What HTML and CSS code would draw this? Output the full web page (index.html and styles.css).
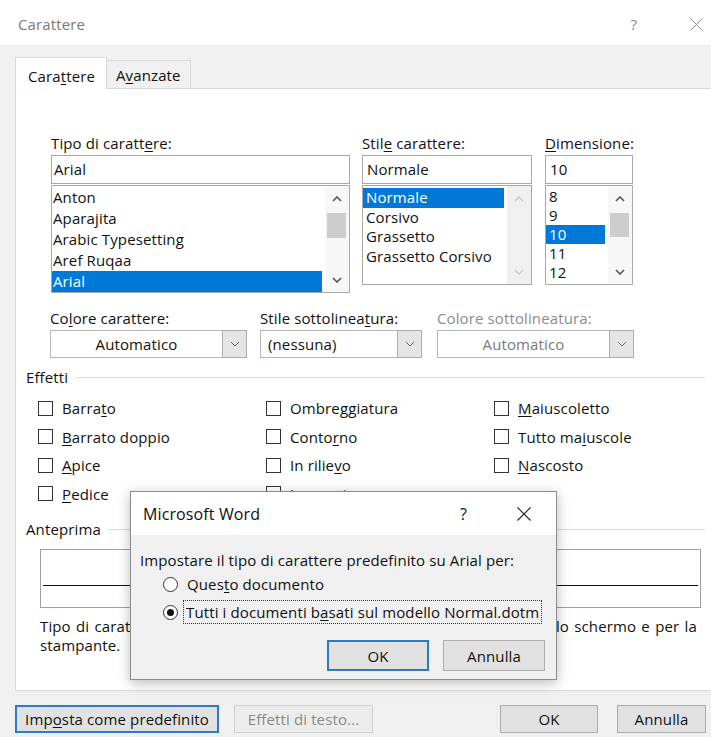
FILE: index.html
```html
<!DOCTYPE html>
<html lang="it">
<head>
<meta charset="utf-8">
<title>Carattere</title>
<link rel="stylesheet" href="styles.css">
</head>
<body>
<div class="dialog">
  <header class="titlebar">
    <span class="title">Carattere</span>
    <span class="tb-help">?</span>
    <svg class="tb-close" width="13" height="13" viewBox="0 0 13 13"><path d="M0.5 0.5 L12.5 12.5 M12.5 0.5 L0.5 12.5" stroke="#8a8a8a" stroke-width="1" fill="none"/></svg>
  </header>

  <nav class="tabstrip">
    <div class="tab active">Cara<u>t</u>tere</div>
    <div class="tab">A<u>v</u>anzate</div>
  </nav>

  <section class="panel">
    <div class="font-row">
      <div class="field f-name">
        <div class="lbl">Tipo di caratt<u>e</u>re:</div>
        <div class="textbox">Arial</div>
        <div class="listbox tall">
          <ul class="items lh21">
            <li>Anton</li>
            <li>Aparajita</li>
            <li>Arabic Typesetting</li>
            <li>Aref Ruqaa</li>
            <li class="sel">Arial</li>
          </ul>
          <div class="scroll">
            <div class="arrow up"><svg width="10" height="6" viewBox="0 0 10 6"><polyline points="1,5 5,1 9,5" fill="none" stroke="#555" stroke-width="1.6"/></svg></div>
            <div class="thumb"></div>
            <div class="spacer"></div>
            <div class="arrow down"><svg width="10" height="6" viewBox="0 0 10 6"><polyline points="1,1 5,5 9,1" fill="none" stroke="#555" stroke-width="1.6"/></svg></div>
          </div>
        </div>
      </div>

      <div class="field f-style">
        <div class="lbl">Stil<u>e</u> carattere:</div>
        <div class="textbox pad4">Normale</div>
        <div class="listbox">
          <ul class="items lh20 pad3">
            <li class="sel">Normale</li>
            <li>Corsivo</li>
            <li>Grassetto</li>
            <li>Grassetto Corsivo</li>
          </ul>
          <div class="scroll off">
            <div class="arrow up"><svg width="10" height="6" viewBox="0 0 10 6"><polyline points="1,5 5,1 9,5" fill="none" stroke="#c8c8c8" stroke-width="1.4"/></svg></div>
            <div class="spacer"></div>
            <div class="arrow down"><svg width="10" height="6" viewBox="0 0 10 6"><polyline points="1,1 5,5 9,1" fill="none" stroke="#c8c8c8" stroke-width="1.4"/></svg></div>
          </div>
        </div>
      </div>

      <div class="field f-size">
        <div class="lbl"><u>D</u>imensione:</div>
        <div class="textbox pad4">10</div>
        <div class="listbox">
          <ul class="items lh19 pad4">
            <li>8</li>
            <li>9</li>
            <li class="sel">10</li>
            <li>11</li>
            <li>12</li>
          </ul>
          <div class="scroll">
            <div class="arrow up"><svg width="10" height="6" viewBox="0 0 10 6"><polyline points="1,5 5,1 9,5" fill="none" stroke="#555" stroke-width="1.6"/></svg></div>
            <div class="thumb short"></div>
            <div class="spacer"></div>
            <div class="arrow down"><svg width="10" height="6" viewBox="0 0 10 6"><polyline points="1,1 5,5 9,1" fill="none" stroke="#555" stroke-width="1.6"/></svg></div>
          </div>
        </div>
      </div>
    </div>

    <div class="combo-row">
      <div class="field c-color">
        <div class="lbl">Co<u>l</u>ore carattere:</div>
        <div class="combo center">
          <span class="value">Automatico</span>
          <span class="drop"><svg width="10" height="6" viewBox="0 0 10 6"><polyline points="1,1 5,5 9,1" fill="none" stroke="#666" stroke-width="1"/></svg></span>
        </div>
      </div>
      <div class="field c-under">
        <div class="lbl">Stile sottolinea<u>t</u>ura:</div>
        <div class="combo">
          <span class="value">(nessuna)</span>
          <span class="drop"><svg width="10" height="6" viewBox="0 0 10 6"><polyline points="1,1 5,5 9,1" fill="none" stroke="#666" stroke-width="1"/></svg></span>
        </div>
      </div>
      <div class="field c-ucolor disabled">
        <div class="lbl">Colore sottolineatura:</div>
        <div class="combo center">
          <span class="value">Automatico</span>
          <span class="drop"><svg width="10" height="6" viewBox="0 0 10 6"><polyline points="1,1 5,5 9,1" fill="none" stroke="#777" stroke-width="1"/></svg></span>
        </div>
      </div>
    </div>

    <div class="group-head effects-head"><span>Effetti</span><i class="rule"></i></div>
    <div class="checks">
      <label class="check"><span class="box"></span>Barra<u>t</u>o</label>
      <label class="check"><span class="box"></span>Ombre<u>g</u>giatura</label>
      <label class="check"><span class="box"></span><u>M</u>aiuscoletto</label>
      <label class="check"><span class="box"></span><u>B</u>arrato doppio</label>
      <label class="check"><span class="box"></span>Conto<u>r</u>no</label>
      <label class="check"><span class="box"></span>Tutto ma<u>i</u>uscole</label>
      <label class="check"><span class="box"></span><u>A</u>pice</label>
      <label class="check"><span class="box"></span>In rilie<u>v</u>o</label>
      <label class="check"><span class="box"></span><u>N</u>ascosto</label>
      <label class="check"><span class="box"></span><u>P</u>edice</label>
      <label class="check"><span class="box"></span>Incassato</label>
    </div>

    <div class="group-head preview-head"><span>Anteprima</span><i class="rule"></i></div>
    <div class="preview"><div class="baseline"></div></div>
    <p class="note">Tipo di carattere TrueType. Verrà utilizzato sia per la visualizzazione sullo schermo e per la stampante.</p>
  </section>

  <footer class="buttons">
    <button class="btn default">Imp<u>o</u>sta come predefinito</button>
    <button class="btn disabled">Effetti di testo...</button>
    <span class="grow"></span>
    <button class="btn ok">OK</button>
    <button class="btn cancel">Annulla</button>
  </footer>

  <div class="msgbox">
    <div class="msg-title">
      <span class="msg-caption">Microsoft Word</span>
      <span class="msg-help">?</span>
      <svg class="msg-close" width="14" height="14" viewBox="0 0 14 14"><path d="M0.5 0.5 L13.5 13.5 M13.5 0.5 L0.5 13.5" stroke="#222" stroke-width="1.1" fill="none"/></svg>
    </div>
    <div class="msg-body">
      <div class="msg-text">Impostare il tipo di carattere predefinito su Arial per:</div>
      <div class="radio-row"><span class="radio"></span><span>Ques<u>t</u>o documento</span></div>
      <div class="radio-row"><span class="radio on"></span><span class="focus">Tutti i documenti b<u>a</u>sati sul modello Normal.dotm</span></div>
      <div class="msg-buttons">
        <button class="btn mb default">OK</button>
        <button class="btn mb">Annulla</button>
      </div>
    </div>
  </div>
</div>
</body>
</html>
```

FILE: styles.css
```css
* { box-sizing: border-box; }

html, body {
  margin: 0;
  padding: 0;
  background: #ffffff;
}

body {
  font-family: "Open Sans", "Noto Sans", sans-serif;
  font-size: 15px;
  letter-spacing: 0.12px;
  color: #111;
}

u { text-decoration-thickness: 1px; text-underline-offset: 2px; }

.dialog {
  position: relative;
  width: 711px;
  height: 737px;
  overflow: hidden;
  background: #f0f0f0;
}

/* window caption */
.titlebar {
  height: 45px;
  background: #fff;
  display: flex;
  align-items: center;
  padding: 0 0 0 18px;
}
.title { color: #7a7a7a; flex: 1; margin-top: 2px; }
.tb-help { color: #8a8a8a; margin-right: 53px; margin-top: 2px; }
.tb-close { margin-right: 8px; margin-top: 3px; }

/* tabs */
.tabstrip {
  height: 43px;
  display: flex;
  align-items: flex-end;
  padding-left: 15px;
  position: relative;
  z-index: 2;
}
.tab {
  height: 28px;
  padding: 0 9px;
  border: 1px solid #d9d9d9;
  border-bottom: none;
  border-left: none;
  display: flex;
  align-items: center;
  background: #f0f0f0;
  width: 84px;
}
.tab.active {
  height: 32px;
  margin-bottom: -1px;
  background: #fff;
  border-left: 1px solid #d9d9d9;
  width: 92px;
  padding-left: 12px;
  padding-top: 5px;
}

/* tab page */
.panel {
  margin-left: 15px;
  height: 603px;
  background: #fff;
  border-top: 1px solid #d9d9d9;
  border-left: 1px solid #d9d9d9;
  border-bottom: 1px solid #d9d9d9;
  padding: 44px 6px 0 10px;
}

.lbl { height: 20px; line-height: 20px; margin-bottom: 2px; white-space: nowrap; }

.font-row { display: flex; padding-left: 25px; align-items: flex-start; }
.f-name { width: 299px; }
.f-style { width: 170px; margin-left: 12px; }
.f-size { width: 88px; margin-left: 13px; }

.textbox {
  height: 29px;
  border: 1px solid #a9a9a9;
  line-height: 27px;
  padding-left: 2px;
}
.textbox.pad4 { padding-left: 4px; }

.listbox {
  margin-top: 1px;
  height: 100px;
  border: 1px solid #a9a9a9;
  display: flex;
}
.listbox.tall { height: 108px; }

.items {
  list-style: none;
  margin: 0;
  padding: 1px 0 0 0;
  flex: 1;
  white-space: nowrap;
  overflow: hidden;
}
.items li { padding-left: 1px; }
.items.pad3 li { padding-left: 3px; }
.items.pad4 li { padding-left: 3px; }
.items.lh21 li { height: 21px; line-height: 21px; }
.items.lh20 { padding-top: 2px; }
.items.lh20 li { height: 19.5px; line-height: 19.5px; }
.items.lh19 li { height: 19px; line-height: 19px; }
.items li.sel { background: #0078d7; color: #fff; }

.scroll {
  width: 24px;
  margin-left: 3px;
  display: flex;
  flex-direction: column;
  background: #f7f7f7;
}
.scroll.off { background: #f0f0f0; }
.scroll .arrow { display: flex; align-items: center; justify-content: center; }
.scroll .arrow.up { height: 26px; }
.scroll .arrow.down { height: 24px; }
.scroll .thumb { height: 25px; margin: 1px 3px 0 2px; background: #cdcdcd; }
.scroll .thumb.short { height: 24px; }
.scroll .spacer { flex: 1; }

/* drop-down lists */
.combo-row { display: flex; padding-left: 24px; margin-top: 15px; }
.c-color { width: 197px; }
.c-under { width: 162px; margin-left: 13px; }
.c-ucolor { width: 197px; margin-left: 15px; }
.disabled .lbl { color: #8c8c8c; }

.combo {
  height: 28px;
  border: 1px solid #b4b4b4;
  display: flex;
  background: #fff;
}
.combo .value { flex: 1; line-height: 26px; padding-left: 7px; }
.combo.center .value { text-align: center; padding-left: 0; }
.disabled .combo .value { color: #7a7a7a; }
.combo .drop {
  width: 25px;
  margin: -1px -1px -1px 0;
  border: 1px solid #adadad;
  background: #e5e5e5;
  display: flex;
  align-items: center;
  justify-content: center;
}

/* group captions */
.group-head {
  display: flex;
  align-items: center;
  height: 20px;
  line-height: 20px;
}
.group-head .rule { flex: 1; border-top: 1px solid #dcdcdc; margin-left: 7px; height: 0; }
.effects-head { margin-top: 9px; }
.preview-head { margin-top: 11px; }

.checks {
  display: grid;
  grid-template-columns: 228px 228px 1fr;
  grid-auto-rows: 28.5px;
  padding-left: 12px;
  margin-top: 7px;
}
.check { display: flex; align-items: center; white-space: nowrap; }
.check .box {
  width: 15px;
  height: 15px;
  border: 1px solid #333;
  background: #fff;
  margin-right: 9px;
}

.preview {
  margin: 10px 0 0 14px;
  height: 59px;
  width: 661px;
  border: 1px solid #a0a0a0;
  padding: 35px 2px 0;
}
.preview .baseline { border-top: 1.5px solid #111; }

.note {
  margin: 9px 0 0 14px;
  width: 665px;
  line-height: 19px;
  word-spacing: 1.25px;
}

/* command buttons */
.buttons {
  display: flex;
  padding: 14px 5px 0 15px;
}
.grow { flex: 1; }
.btn {
  font-family: inherit;
  font-size: 15px;
  letter-spacing: 0.12px;
  color: #111;
  height: 28px;
  background: #e1e1e1;
  border: 1px solid #adadad;
  padding: 0;
}
.btn.default { border: 2px solid #2f7bc0; }
.buttons .default { width: 204px; }
.buttons .disabled { width: 139px; margin-left: 15px; color: #8a8a8a; background: #ececec; border-color: #cfcfcf; }
.buttons .ok { width: 98px; }
.buttons .cancel { width: 89px; margin-left: 19px; }

/* message box on top of the dialog */
.msgbox {
  position: absolute;
  left: 130px;
  top: 491px;
  width: 427px;
  height: 189px;
  border: 1px solid #8c8c8c;
  background: #f0f0f0;
  box-shadow: 0 3px 12px rgba(0,0,0,0.28);
  z-index: 5;
}
.msg-title {
  height: 43px;
  background: #fff;
  display: flex;
  align-items: center;
  padding-left: 12px;
}
.msg-caption { flex: 1; font-size: 16px; color: #111; }
.msg-help { font-size: 16px; margin-right: 50px; }
.msg-close { margin-right: 25px; }

.msg-body { padding: 15px 0 0 9px; }
.msg-text { line-height: 20px; white-space: nowrap; }
.radio-row {
  display: flex;
  align-items: center;
  height: 28px;
  padding-left: 23px;
  white-space: nowrap;
}
.radio {
  width: 15px;
  height: 15px;
  border-radius: 50%;
  border: 1px solid #333;
  background: #fff;
  margin-right: 9px;
  display: flex;
  align-items: center;
  justify-content: center;
}
.radio.on::after {
  content: "";
  width: 7px;
  height: 7px;
  border-radius: 50%;
  background: #111;
}
.focus { outline: 1px dotted #333; outline-offset: 1px; padding: 0 1px; margin-left: -2px; }

.msg-buttons {
  display: flex;
  gap: 14px;
  padding-left: 187px;
  margin-top: 14px;
}
.btn.mb { width: 102px; height: 31px; }
```
